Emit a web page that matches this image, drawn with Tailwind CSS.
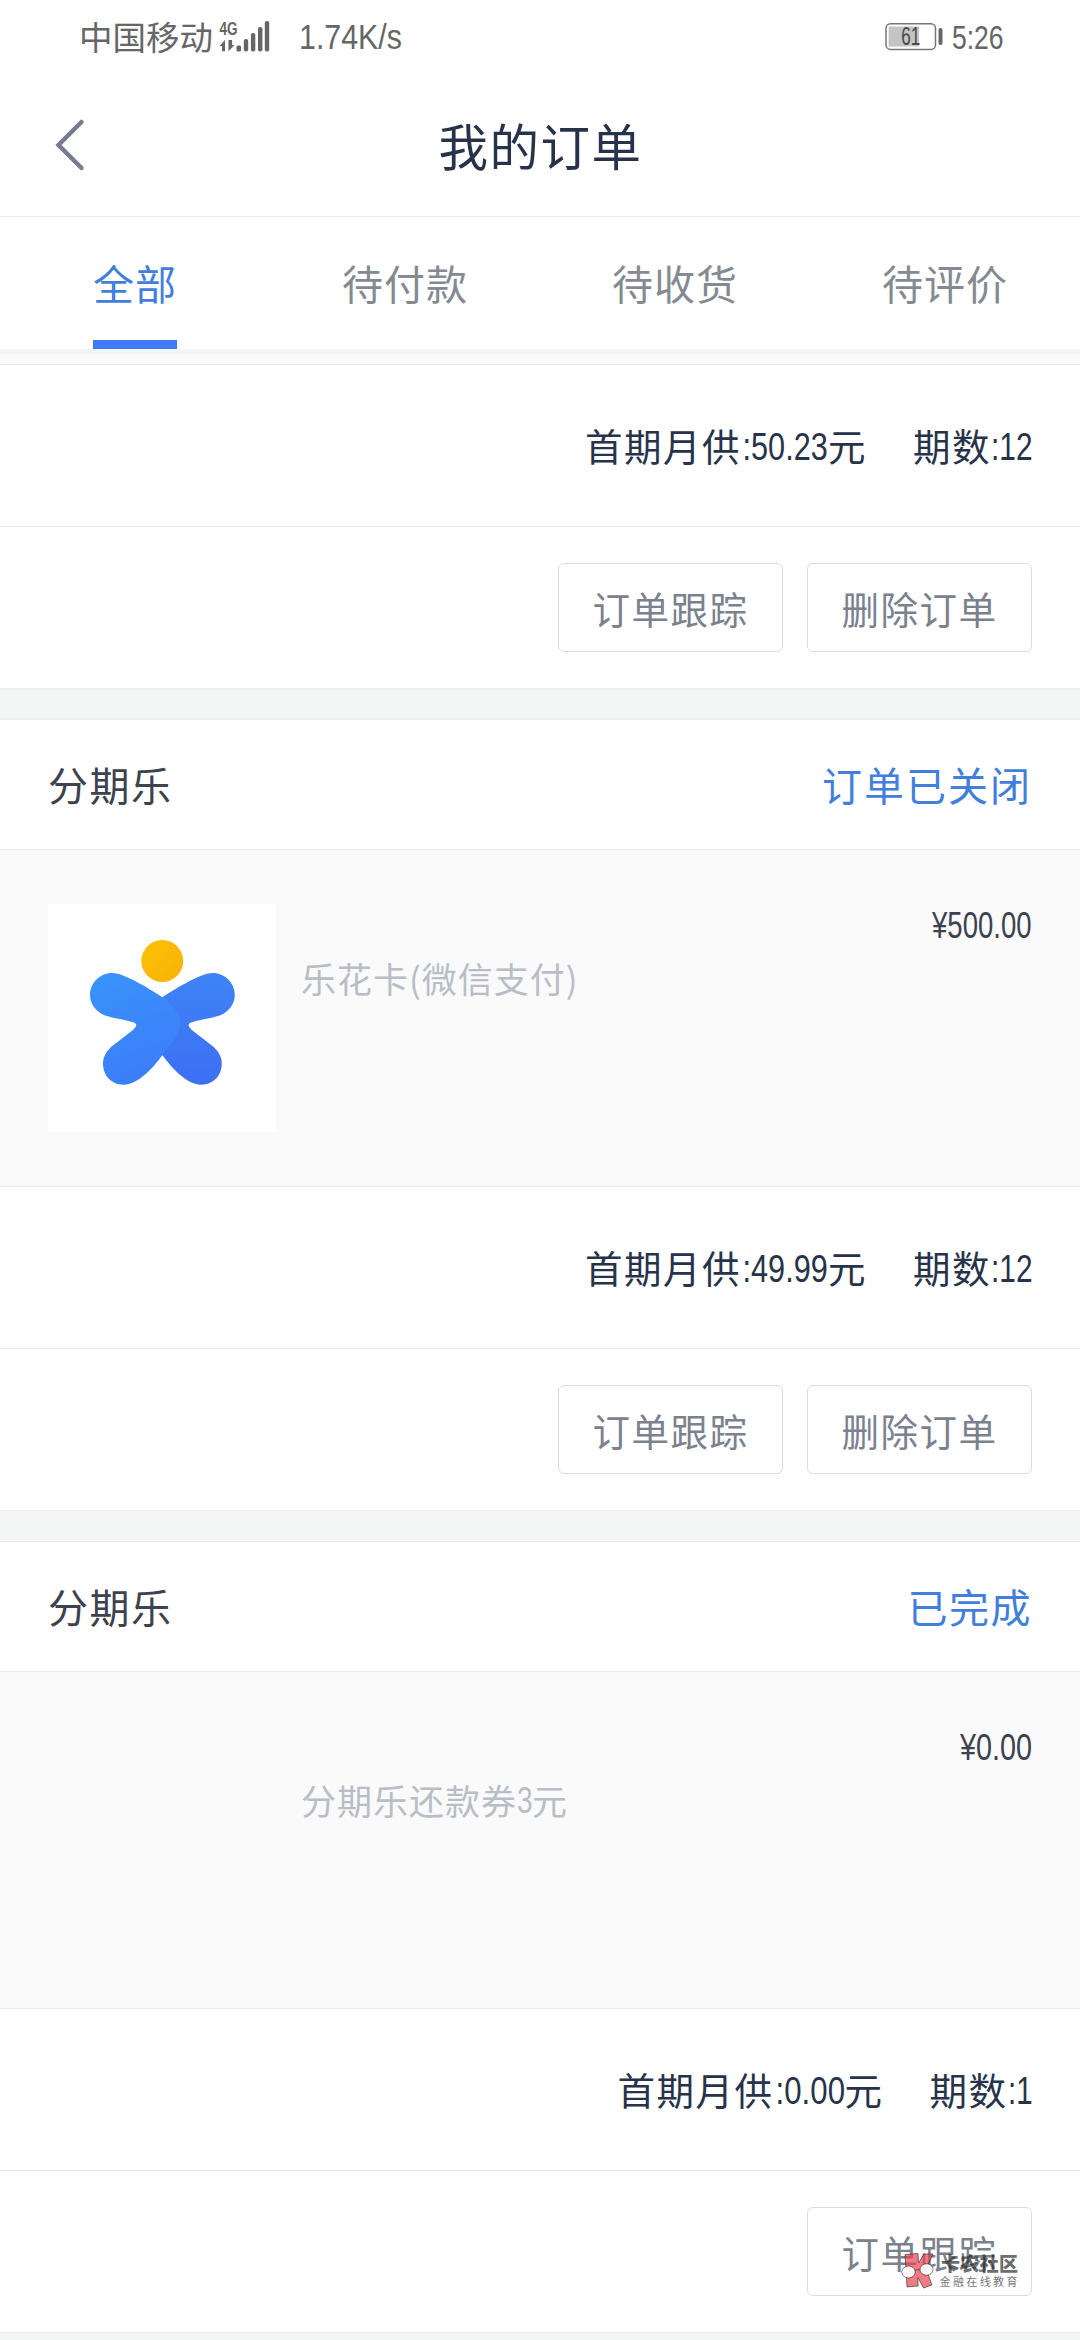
<!DOCTYPE html>
<html lang="zh-CN">
<head>
<meta charset="utf-8">
<title>我的订单</title>
<script src="https://cdn.jsdelivr.net/npm/@tailwindcss/browser@4"></script>
</head>
<body class="bg-white">
<div class="relative flex h-[2340px] w-[1080px] flex-col overflow-hidden bg-white font-['Noto_Sans_CJK_SC',sans-serif] whitespace-nowrap">

  <!-- status bar -->
  <div class="flex h-[74px] shrink-0 items-center pl-[79px] text-[33.5px] leading-[74px] text-[#666]">
    <span class="h-[74px] w-[134px] leading-[71px]">中国移动</span>
    <svg class="ml-[5px] h-[74px] w-[54px]" viewBox="218 0 54 74" fill="#666">
      <text x="219.500" y="34.500" font-family="Liberation Sans" font-weight="700" font-size="18.500" textLength="18" lengthAdjust="spacingAndGlyphs">4G</text>
      <path d="M219.500 46L225 40V51.300H222V46ZM228.500 40V51.300L234.500 45H232V40Z"/>
      <rect x="236.500" y="45.500" width="4.600" height="6" rx="1.500"/>
      <rect x="243.800" y="39" width="4.400" height="12.500" rx="2"/>
      <rect x="250.900" y="33" width="4.400" height="18.500" rx="2"/>
      <rect x="258" y="27" width="4.400" height="24.500" rx="2"/>
      <rect x="264.800" y="21" width="4.400" height="30.500" rx="2"/>
    </svg>
    <span class="ml-[27px] h-[74px] w-[103px] origin-left scale-x-[.88] font-['Liberation_Sans',sans-serif] text-[34.5px] leading-[75px]">1.74K/s</span>
    <svg class="ml-[482px] h-[74px] w-[60px]" viewBox="884 0 60 74">
      <rect x="886" y="23.800" width="49.500" height="25.600" rx="4.500" fill="#fff" stroke="#777" stroke-width="1.500"/>
      <rect x="888.600" y="26.500" width="30.500" height="20" fill="#c4c4c4"/>
      <rect x="938.500" y="28" width="4" height="17" rx="2" fill="#666"/>
      <text x="901.300" y="45.300" font-family="Liberation Sans" font-size="25" fill="#4a4a4a" textLength="19" lengthAdjust="spacingAndGlyphs">61</text>
    </svg>
    <span class="ml-[8px] h-[74px] w-[52px] origin-left scale-x-[.78] font-['Liberation_Sans',sans-serif] text-[34px]">5:26</span>
  </div>

  <!-- title bar -->
  <div class="grid h-[143px] shrink-0 grid-cols-[200px_1fr_200px] border-b border-[#e9eaea]">
    <svg class="h-[142px] w-[200px]" viewBox="0 74 200 142" fill="none" stroke="#757d8c" stroke-width="4.500" stroke-linecap="round" stroke-linejoin="miter"><path d="M81.500 122L58.500 145L81.500 168"/></svg>
    <h1 class="pl-px text-center text-[49.5px] leading-[141px] tracking-[1.5px] text-[#27334a]">我的订单</h1>
  </div>

  <!-- tabs -->
  <div class="grid h-[132px] shrink-0 grid-cols-4 text-center text-[41px] leading-[131px] tracking-[1px] text-[#858a91]">
    <div class="flex justify-center"><span class="h-[132px] border-b-[9px] border-[#4279f8] text-[#427fdc]">全部</span></div>
    <span>待付款</span><span>待收货</span><span>待评价</span>
  </div>
  <div class="h-[5px] shrink-0 bg-[#f3f6f6]"></div>
  <div class="h-[11px] shrink-0 border-b border-[#e9eaea] bg-[#fafafa]"></div>

  <!-- order 1 (scrolled) -->
  <div class="flex h-[162px] shrink-0 justify-end border-b border-[#e9eaea] pr-12 text-[37.5px] leading-[160px] tracking-[1.5px] text-[#27334a]">
    <span>首期月供</span><span class="w-[87px] origin-left scale-x-[.785] pl-[2px] font-['Liberation_Sans',sans-serif] text-[39px] leading-[164px] tracking-normal">:50.23</span><span>元</span>
    <span class="ml-[46px]">期数</span><span class="w-[41px] origin-left scale-x-[.765] font-['Liberation_Sans',sans-serif] text-[39px] leading-[164px] tracking-normal">:12</span>
  </div>
  <div class="flex h-[162px] shrink-0 items-center justify-end gap-6 border-b border-[#e9eaea] pr-12 text-[37.5px] tracking-[1.5px] text-[#7b818d]">
    <span class="h-[89px] w-[225px] rounded-md border border-[#d9dddf] text-center leading-[87px]">订单跟踪</span>
    <span class="h-[89px] w-[225px] rounded-md border border-[#d9dddf] text-center leading-[87px]">删除订单</span>
  </div>
  <div class="h-[31px] shrink-0 border-b border-[#e9eaea] bg-[#f4f6f6]"></div>

  <!-- order 2 -->
  <div class="flex h-[130px] shrink-0 justify-between border-b border-[#e9eaea] px-12 text-[40px] leading-[128px]">
    <span class="tracking-[1.5px] text-[#3c424e]">分期乐</span><span class="tracking-[2px] text-[#427fdc]">订单已关闭</span>
  </div>
  <div class="flex h-[337px] shrink-0 border-b border-[#e9eaea] bg-[#fafafa] pr-12 pl-12 text-[36px]">
    <svg class="mt-[54px] h-[228px] w-[228px] shrink-0 bg-white" viewBox="0 0 228 228">
      <defs>
        <linearGradient id="wingL" x1="0" y1="0" x2="0.300" y2="1"><stop offset="0" stop-color="#3a93fc"/><stop offset="1" stop-color="#3b7ef8"/></linearGradient>
        <linearGradient id="wingR" x1="0" y1="0" x2="0" y2="1"><stop offset="0" stop-color="#3f83f6"/><stop offset="1" stop-color="#3d6ff3"/></linearGradient>
        <linearGradient id="head" x1="0" y1="0" x2="1" y2="1"><stop offset="0" stop-color="#fcc106"/><stop offset="1" stop-color="#f9b208"/></linearGradient>
      </defs>
      <circle cx="114.300" cy="57" r="21" fill="url(#head)"/>
      <path fill="url(#wingR)" transform="matrix(-1 0 0 1 228.800 0)" d="M64 69C75 69 99 83 114.400 93.300C125 101 132 110 132 119C132 130 122 141 114.400 151.300C104 165 90 180.700 75.600 180.700C63 180.700 55 171 55 159.500C55 153 58 148 63 143L85 126Q92 120 84 118C77 115.500 66 114.500 57 111.500C48 108 42 100 42 91C42 79 52 69 64 69Z"/>
      <path fill="url(#wingL)" d="M64 69C75 69 99 83 114.400 93.300C125 101 132 110 132 119C132 130 122 141 114.400 151.300C104 165 90 180.700 75.600 180.700C63 180.700 55 171 55 159.500C55 153 58 148 63 143L85 126Q92 120 84 118C77 115.500 66 114.500 57 111.500C48 108 42 100 42 91C42 79 52 69 64 69Z"/>
    </svg>
    <div class="mt-[98px] ml-[25px] flex grow text-[35px] leading-[59px] tracking-[1px] text-[#b8bec6]">乐花卡(微信支付)</div>
    <span class="mt-[44px] w-[100px] origin-left scale-x-[.765] font-['Liberation_Sans',sans-serif] leading-[64px] text-[#3c424e]">¥500.00</span>
  </div>
  <div class="flex h-[162px] shrink-0 justify-end border-b border-[#e9eaea] pr-12 text-[37.5px] leading-[160px] tracking-[1.5px] text-[#27334a]">
    <span>首期月供</span><span class="w-[87px] origin-left scale-x-[.785] pl-[2px] font-['Liberation_Sans',sans-serif] text-[39px] leading-[164px] tracking-normal">:49.99</span><span>元</span>
    <span class="ml-[46px]">期数</span><span class="w-[41px] origin-left scale-x-[.765] font-['Liberation_Sans',sans-serif] text-[39px] leading-[164px] tracking-normal">:12</span>
  </div>
  <div class="flex h-[162px] shrink-0 items-center justify-end gap-6 border-b border-[#e9eaea] pr-12 text-[37.5px] tracking-[1.5px] text-[#7b818d]">
    <span class="h-[89px] w-[225px] rounded-md border border-[#d9dddf] text-center leading-[87px]">订单跟踪</span>
    <span class="h-[89px] w-[225px] rounded-md border border-[#d9dddf] text-center leading-[87px]">删除订单</span>
  </div>
  <div class="h-[31px] shrink-0 border-b border-[#e9eaea] bg-[#f4f6f6]"></div>

  <!-- order 3 -->
  <div class="flex h-[130px] shrink-0 justify-between border-b border-[#e9eaea] px-12 text-[40px] leading-[128px]">
    <span class="tracking-[1.5px] text-[#3c424e]">分期乐</span><span class="tracking-[1.5px] text-[#427fdc]">已完成</span>
  </div>
  <div class="flex h-[337px] shrink-0 border-b border-[#e9eaea] bg-[#fafafa] pr-12 pl-[301px] text-[36px]">
    <div class="mt-[98px] flex grow text-[35px] leading-[59px] tracking-[1px] text-[#b8bec6]">分期乐还款券<span class="w-[15px] origin-left scale-x-[.78] font-['Liberation_Sans',sans-serif] text-[36px] leading-[62px] tracking-normal">3</span>元</div>
    <span class="mt-[44px] w-[72px] origin-left scale-x-[.8] font-['Liberation_Sans',sans-serif] leading-[64px] text-[#3c424e]">¥0.00</span>
  </div>
  <div class="flex h-[162px] shrink-0 justify-end border-b border-[#e9eaea] pr-12 text-[37.5px] leading-[160px] tracking-[1.5px] text-[#27334a]">
    <span>首期月供</span><span class="w-[71px] origin-left scale-x-[.8] pl-[2px] font-['Liberation_Sans',sans-serif] text-[39px] leading-[164px] tracking-normal">:0.00</span><span>元</span>
    <span class="ml-[46px]">期数</span><span class="w-[24.500px] origin-left scale-x-[.755] font-['Liberation_Sans',sans-serif] text-[39px] leading-[164px] tracking-normal">:1</span>
  </div>
  <div class="flex h-[162px] shrink-0 items-center justify-end gap-6 border-b border-[#e9eaea] pr-12 text-[37.5px] tracking-[1.5px] text-[#7b818d]">
    <span class="h-[89px] w-[225px] rounded-md border border-[#d9dddf] text-center leading-[87px]">订单跟踪</span>
  </div>
  <div class="h-[7px] shrink-0 bg-[#f4f6f6]"></div>

  <!-- watermark -->
  <svg class="absolute top-[2248px] left-[896px] h-[44px] w-[126px]" viewBox="896 2248 126 44">
    <g stroke="#2a2a2a" stroke-opacity=".6" stroke-width="1" stroke-linejoin="round">
      <path fill="#ea4350" fill-opacity=".7" d="M905 2254.500L918 2253.500L918.500 2263L924 2254H933L926 2269L932 2285L923.500 2288L918 2277.500V2286L907 2287L906 2269Z"/>
      <ellipse cx="908.500" cy="2272" rx="6.700" ry="6" fill="#fff" fill-opacity=".92"/>
      <ellipse cx="926.500" cy="2269.500" rx="6.500" ry="5.800" fill="#fff" fill-opacity=".92"/>
      <path fill="none" d="M915 2270.500Q917.500 2269 920 2270"/>
    </g>
    <text x="941" y="2270.500" font-family="Noto Sans CJK SC" font-weight="900" font-size="19" fill="#222" fill-opacity=".68" textLength="77">卡农社区</text>
    <text x="939.500" y="2285.500" font-family="Noto Sans CJK SC" font-size="11" fill="#444" fill-opacity=".75" textLength="78">金融在线教育</text>
  </svg>
</div>
</body>
</html>
